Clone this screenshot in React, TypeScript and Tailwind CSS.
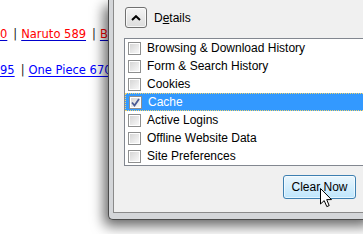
import React from 'react';

type Row = { label: string; checked?: boolean; selected?: boolean };

const rows: Row[] = [
  { label: 'Browsing & Download History' },
  { label: 'Form & Search History' },
  { label: 'Cookies' },
  { label: 'Cache', checked: true, selected: true },
  { label: 'Active Logins' },
  { label: 'Offline Website Data' },
  { label: 'Site Preferences' },
];

const CheckBox: React.FC<{ checked?: boolean }> = ({ checked }) => (
  <span className="flex h-[13px] w-[13px] shrink-0 items-center justify-center border border-[#8e8f8f] bg-white p-[1px]">
    <span className="flex h-full w-full items-center justify-center bg-gradient-to-br from-[#d6d6d6] to-[#f8f8f8]">
      {checked && (
        <svg width="9" height="9" viewBox="0 0 9 9">
          <path d="M1 4.5 L3.5 7.5 L8 1" fill="none" stroke="#4a5a94" strokeWidth="1.8" />
        </svg>
      )}
    </span>
  </span>
);

export default function App() {
  return (
    <div className="relative h-[234px] w-[363px] overflow-hidden bg-white">
      {/* page behind the dialog */}
      <div className="pt-[27px] text-[11.5px] leading-[14px] whitespace-nowrap" style={{ fontFamily: '"DejaVu Sans", Verdana, sans-serif' }}>
        <div>
          <a className="text-[#ff0000] underline decoration-[#0000cc] underline-offset-2">0</a>
          <span className="ml-[6px] mr-[4px] text-[#222]">|</span>
          <a className="text-[#ff0000] underline decoration-[#0000cc] underline-offset-2">Naruto 589</a>
          <span className="ml-[6px] mr-[4px] text-[#222]">|</span>
          <a className="text-[#ff0000] underline decoration-[#0000cc] underline-offset-2">Bleach 470</a>
        </div>
        <div className="mt-[22px]">
          <a className="text-[#0000ff] underline underline-offset-2">95</a>
          <span className="ml-[6px] mr-[4px] text-[#222]">|</span>
          <a className="text-[#0000ff] underline underline-offset-2">One Piece 670</a>
        </div>
      </div>

      {/* dialog window */}
      <div className="absolute left-[108px] top-0 h-[220px] w-[266px] rounded-bl-[5px] border-b border-l border-[#4c4c4c] bg-[#d4d6d9] pb-[6px] pl-[4px] shadow-[-4px_6px_13px_rgba(0,0,0,0.6)]">
        <div
          className="flex h-[213px] w-[261px] flex-col border-b border-l border-[#8a8a8a] bg-[#f0f0f0] text-[12px] text-black"
          style={{ fontFamily: '"Liberation Sans", Arial, sans-serif' }}
        >
          <div className="ml-[11px] mt-[7px] flex items-center gap-[7px]">
            <button className="flex h-[21px] w-[22px] items-center justify-center rounded-[3px] border border-[#707070] bg-gradient-to-b from-[#f4f4f4] to-[#dcdcdc] shadow-[inset_0_0_0_1px_rgba(255,255,255,0.7)]">
              <svg width="10" height="6" viewBox="0 0 10 6">
                <path d="M1 5 L5 1.2 L9 5" fill="none" stroke="#000" strokeWidth="2" />
              </svg>
            </button>
            <span>
              D<span className="underline">e</span>tails
            </span>
          </div>

          <div className="ml-[10px] mr-[6px] mt-[10px] border border-[#828790] bg-white">
            {rows.map((r) => (
              <div
                key={r.label}
                className={`flex h-[18px] items-center gap-[6px] pl-[3px] whitespace-nowrap ${
                  r.selected ? 'border border-dotted border-[#f2d36b] bg-[#3399ff] pl-[2px] text-white' : ''
                }`}
              >
                <CheckBox checked={r.checked} />
                <span>{r.label}</span>
              </div>
            ))}
          </div>

          <div className="mr-[18px] mt-[9px] flex justify-end">
            <button className="h-[24px] w-[73px] rounded-[3px] border border-[#3c7fb1] bg-gradient-to-b from-[#eaf6fd] to-[#bee6fd] text-black shadow-[inset_0_0_0_1px_rgba(255,255,255,0.6)]">
              Clear Now
            </button>
          </div>
        </div>
      </div>

      {/* mouse pointer */}
      <svg className="absolute left-[320px] top-[188px]" width="13" height="20" viewBox="0 0 13 20">
        <path d="M0.5 0.5 L0.5 16 L4.2 12.6 L6.8 18.6 L9.2 17.6 L6.7 11.6 L11.5 11.6 Z" fill="#fff" stroke="#000" strokeWidth="1" strokeLinejoin="round" />
      </svg>
    </div>
  );
}
